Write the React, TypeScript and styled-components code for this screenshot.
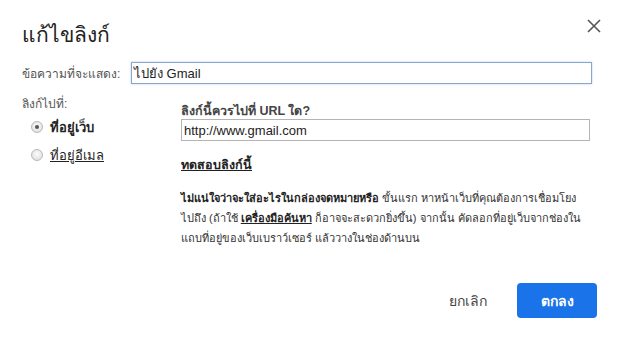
import React from "react";
import styled, { createGlobalStyle } from "styled-components";

const Global = createGlobalStyle`
  html, body { margin: 0; padding: 0; background: #ffffff; }
  body { font-family: "Liberation Sans", "Noto Sans", "DejaVu Sans", sans-serif; color: #222; }
`;

const Dialog = styled.div`
  width: 620px;
  height: 340px;
  box-sizing: border-box;
  padding: 18px 22px 0 22px;
  display: flex;
  flex-direction: column;
  background: #fff;
`;

const Header = styled.div`
  display: flex;
  justify-content: space-between;
  align-items: flex-start;
  height: 40px;
`;

const Title = styled.h1`
  margin: 0;
  font-size: 21px;
  font-weight: normal;
  color: #222;
  line-height: 34px;
`;

const CloseButton = styled.button`
  border: none;
  background: none;
  padding: 0;
  margin: -1px -5px 0 0;
  width: 18px;
  height: 18px;
  display: flex;
  align-items: center;
  justify-content: center;
  cursor: pointer;
`;

const FieldRow = styled.div`
  display: flex;
  align-items: center;
  gap: 3px;
  margin-top: 4px;
  padding-right: 6px;
`;

const Label = styled.span`
  font-size: 12px;
  color: #555;
  white-space: nowrap;
  width: 106px;
`;

const TextInput = styled.div<{ $focused?: boolean; $grow?: boolean }>`
  flex: ${(p) => (p.$grow ? "1 1 auto" : "none")};
  height: 22px;
  box-sizing: border-box;
  border: 1px solid ${(p) => (p.$focused ? "#8aa6cf" : "#b4b4b4")};
  box-shadow: ${(p) => (p.$focused ? "0 0 2px rgba(120,160,210,0.5)" : "none")};
  font-size: 13px;
  color: #222;
  padding: 0 2px;
  display: flex;
  align-items: center;
`;

const Body = styled.div`
  display: grid;
  grid-template-columns: 159px 1fr;
  margin-top: 11px;
  padding-right: 8px;
`;

const LeftCol = styled.div`
  display: flex;
  flex-direction: column;
`;

const SectionLabel = styled.div`
  font-size: 12px;
  color: #555;
  line-height: 18px;
`;

const RadioRow = styled.label<{ $top: number }>`
  display: flex;
  align-items: center;
  gap: 7px;
  margin-left: 9px;
  height: 18px;
  margin-top: ${(p) => p.$top}px;
`;

const RadioDot = styled.span<{ $checked?: boolean }>`
  width: 10px;
  height: 10px;
  border-radius: 50%;
  border: 1px solid #b9b9b9;
  background: radial-gradient(circle at 50% 40%, #fdfdfd, #d8d8d8);
  display: flex;
  align-items: center;
  justify-content: center;
  &::after {
    content: "";
    width: 4px;
    height: 4px;
    border-radius: 50%;
    background: ${(p) => (p.$checked ? "#555" : "transparent")};
  }
`;

const RadioText = styled.span<{ $link?: boolean }>`
  font-size: 13px;
  font-weight: ${(p) => (p.$link ? "normal" : "bold")};
  text-decoration: ${(p) => (p.$link ? "underline" : "none")};
  color: #222;
`;

const RightCol = styled.div`
  display: flex;
  flex-direction: column;
  padding-top: 9px;
`;

const BoldLabel = styled.div`
  font-size: 12.5px;
  font-weight: bold;
  color: #444;
  line-height: 14px;
  margin-bottom: 1px;
`;

const TestLink = styled.a`
  font-size: 12.5px;
  font-weight: bold;
  color: #222;
  text-decoration: underline;
  margin-top: 16px;
  line-height: 16px;
  align-self: flex-start;
`;

const Help = styled.p`
  font-size: 11px;
  line-height: 20px;
  color: #333;
  margin: 15px 0 0 0;
  width: 405px;
`;

const Strong = styled.b`
  font-weight: bold;
  color: #222;
`;

const HelpLink = styled.a`
  font-weight: bold;
  text-decoration: underline;
  color: #222;
`;

const Footer = styled.div`
  display: flex;
  justify-content: flex-end;
  align-items: center;
  gap: 30px;
  margin-top: auto;
  margin-bottom: 22px;
  padding-right: 1px;
`;

const TextButton = styled.button`
  border: none;
  background: none;
  font-family: inherit;
  font-size: 14px;
  color: #444;
  padding: 0;
  cursor: pointer;
`;

const PrimaryButton = styled.button`
  width: 80px;
  height: 35px;
  border: none;
  border-radius: 4px;
  background: #1a73e8;
  color: #fff;
  font-family: inherit;
  font-size: 14px;
  font-weight: bold;
  cursor: pointer;
`;

export default function App() {
  return (
    <>
      <Global />
      <Dialog>
        <Header>
          <Title>แก้ไขลิงก์</Title>
          <CloseButton aria-label="close">
            <svg width="14" height="14" viewBox="0 0 14 14">
              <path d="M1 1 L13 13 M13 1 L1 13" stroke="#555" strokeWidth="1.6" />
            </svg>
          </CloseButton>
        </Header>
        <FieldRow>
          <Label>ข้อความที่จะแสดง:</Label>
          <TextInput $focused $grow>ไปยัง Gmail</TextInput>
        </FieldRow>
        <Body>
          <LeftCol>
            <SectionLabel>ลิงก์ไปที่:</SectionLabel>
            <RadioRow $top={5}>
              <RadioDot $checked />
              <RadioText>ที่อยู่เว็บ</RadioText>
            </RadioRow>
            <RadioRow $top={10}>
              <RadioDot />
              <RadioText $link>ที่อยู่อีเมล</RadioText>
            </RadioRow>
          </LeftCol>
          <RightCol>
            <BoldLabel>ลิงก์นี้ควรไปที่ URL ใด?</BoldLabel>
            <TextInput>http://www.gmail.com</TextInput>
            <TestLink>ทดสอบลิงก์นี้</TestLink>
            <Help>
              <Strong>ไม่แน่ใจว่าจะใส่อะไรในกล่องจดหมายหรือ</Strong> ขั้นแรก หาหน้าเว็บที่คุณต้องการเชื่อมโยงไปถึง (ถ้าใช้{" "}
              <HelpLink>เครื่องมือค้นหา</HelpLink> ก็อาจจะสะดวกยิ่งขึ้น) จากนั้น คัดลอกที่อยู่เว็บจากช่องในแถบที่อยู่ของเว็บเบราว์เซอร์ แล้ววางในช่องด้านบน
            </Help>
          </RightCol>
        </Body>
        <Footer>
          <TextButton>ยกเลิก</TextButton>
          <PrimaryButton>ตกลง</PrimaryButton>
        </Footer>
      </Dialog>
    </>
  );
}
